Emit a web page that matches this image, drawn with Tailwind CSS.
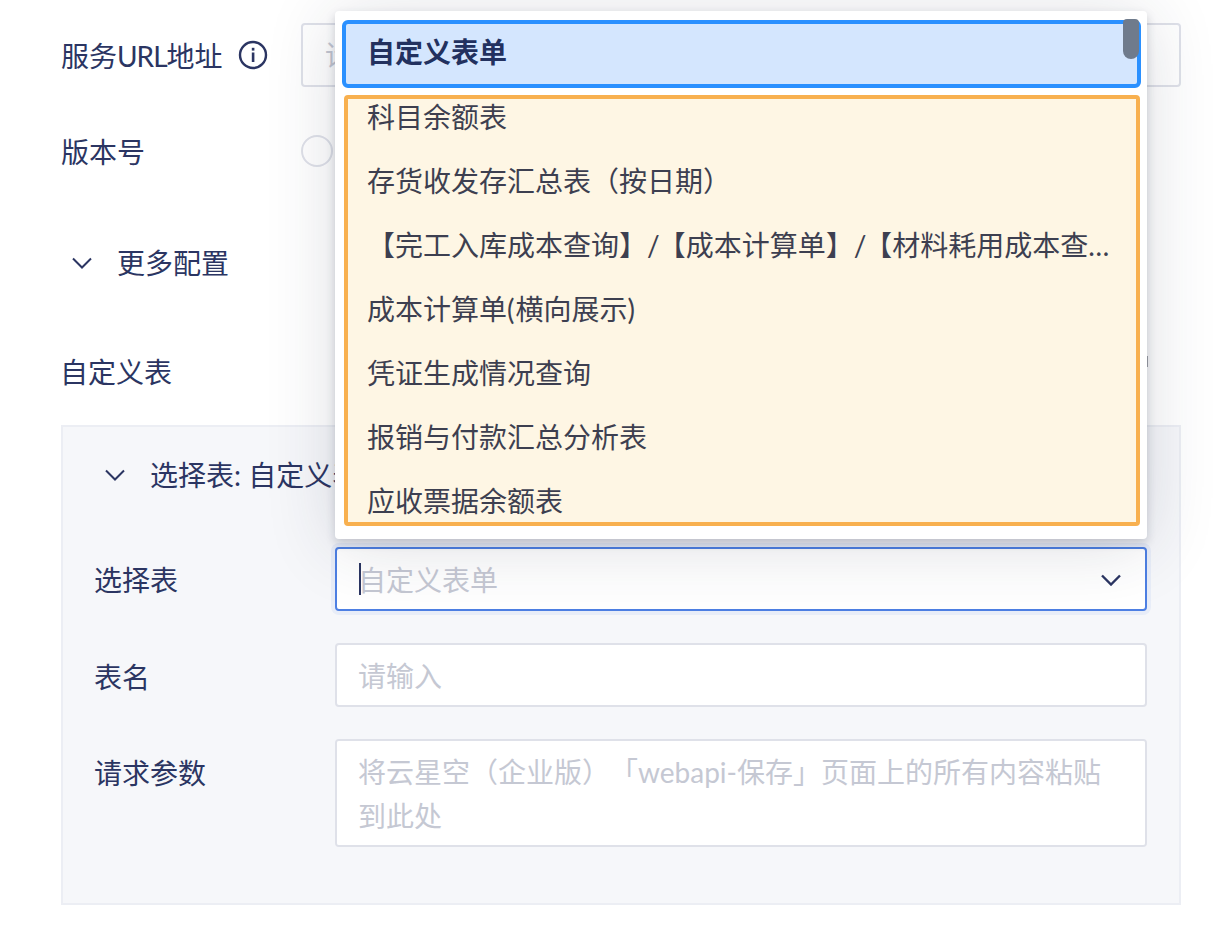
<!doctype html>
<html lang="en">
<head>
    <meta charset="UTF-8">
    <title>自定义表</title>
    <script src="https://cdn.jsdelivr.net/npm/@tailwindcss/browser@4"></script>
</head>
<body class="bg-white">
<div class="relative w-[1225px] h-[926px] overflow-hidden pl-[61px] pr-[44px] pt-[23px] text-[28px] text-[#2b3562] [text-spacing-trim:space-all] font-['Lato','Noto_Sans_CJK_SC',sans-serif]">

    <div class="flex items-center h-[64px]">
        <label class="w-[240px] flex items-center pt-[1px]"><span>服务<span class="tracking-[-1px]">URL</span>地址</span>
            <svg class="ml-[15px] mt-[-2px]" width="30" height="30" viewBox="0 0 30 30" fill="none">
                <circle cx="15" cy="15" r="13" stroke="#2b3562" stroke-width="2.4"/>
                <rect x="13.8" y="12.5" width="2.6" height="9.5" fill="#2b3562"/>
                <rect x="13.8" y="7.8" width="2.6" height="2.8" fill="#2b3562"/>
            </svg>
        </label>
        <input class="flex-1 h-[64px] px-[22px] border-2 border-[#dfe1e9] rounded-[4px] outline-none placeholder:text-[#c5c8d3]" placeholder="请输入">
    </div>

    <div class="flex items-center h-[64px] mt-[32px]">
        <label class="w-[240px] pt-[2px]">版本号</label>
        <span class="w-[32px] h-[32px] rounded-full border-2 border-[#dfe1e9]"></span>
    </div>

    <div class="flex items-center h-[64px] mt-[48px]">
        <svg class="ml-[11px]" width="20" height="12" viewBox="0 0 20 12" fill="none">
            <path d="M1 1.5L10 10.5L19 1.5" stroke="#2b3562" stroke-width="2"/>
        </svg>
        <span class="ml-[25px]">更多配置</span>
    </div>

    <div class="flex items-center h-[64px] mt-[45px]">
        <label class="ml-[-1px]">自定义表</label>
    </div>

    <div class="mt-[21px] h-[480px] border-2 border-[#eceef4] bg-[#f6f7fa] px-[32px]">
        <div class="flex items-center h-[64px] mt-[16px]">
            <svg class="ml-[10px]" width="20" height="12" viewBox="0 0 20 12" fill="none">
                <path d="M1 1.5L10 10.5L19 1.5" stroke="#2b3562" stroke-width="2"/>
            </svg>
            <span class="ml-[25px] whitespace-nowrap">选择表: 自定义表单</span>
        </div>
        <div class="flex items-center h-[64px] mt-[40px]">
            <label class="w-[240px] pt-[2px] ml-[-1px] mr-[1px]">选择表</label>
            <div class="relative flex-1 h-[64px] flex items-center pl-[22px] bg-white border-2 border-[#4d7fe3] rounded-[4px] shadow-[0_0_0_4px_rgba(77,127,227,0.08)]">
                <span class="pt-[2px] text-[#c5c8d3] ml-[-1px]">自定义表单</span>
                <span class="absolute left-[22px] top-[14px] w-[2px] h-[32px] bg-[#2b3562]"></span>
                <svg class="absolute right-[24px] top-[25px]" width="20" height="12" viewBox="0 0 20 12" fill="none">
                    <path d="M1 1.5L10 10.5L19 1.5" stroke="#2b3562" stroke-width="2.4"/>
                </svg>
            </div>
        </div>
        <div class="flex items-center h-[64px] mt-[32px]">
            <label class="w-[240px] pt-[4px] ml-[-1px] mr-[1px]">表名</label>
            <input class="flex-1 h-[64px] pl-[21px] pr-[22px] pt-[2px] bg-white border-2 border-[#dfe1e9] rounded-[4px] outline-none placeholder:text-[#c5c8d3]" placeholder="请输入">
        </div>
        <div class="flex mt-[32px]">
            <label class="w-[240px] pt-[12px] leading-[44px] ml-[-1px] mr-[1px]">请求参数</label>
            <textarea class="flex-1 h-[108px] pl-[21px] pr-[22px] py-[9px] leading-[44px] bg-white border-2 border-[#dfe1e9] rounded-[4px] outline-none resize-none placeholder:text-[#c5c8d3]" placeholder="将云星空（企业版）「webapi-保存」页面上的所有内容粘贴到此处"></textarea>
        </div>
    </div>

    <!-- dropdown over the form -->
    <div class="absolute left-[335px] top-[11px] w-[812px] h-[528px] bg-white rounded-[4px] shadow-[0_4px_10px_rgba(40,45,70,0.2),0_6px_70px_rgba(40,45,70,0.16)]">
        <div class="absolute left-[7px] top-[9px] w-[799px] h-[68px] flex items-center pl-[21px] pb-[4px] bg-[#d4e6fe] border-4 border-[#2a90ff] rounded-[6px] font-bold text-[#22315f]">自定义表单</div>
        <div class="absolute left-[788px] top-[8px] w-[16px] h-[40px] bg-[#6f7b8c] rounded-b-[8px] rounded-t-[4px]"></div>
        <div class="absolute left-[9px] top-[84px] w-[796px] h-[431px] bg-[#fef6e4] border-4 border-[#f8b04f] rounded-[4px] overflow-hidden text-[#3d3f50]">
            <ul class="mt-[-14px] pl-[19px] w-[764px]">
                <li class="h-[64px] flex items-center">科目余额表</li>
                <li class="h-[64px] flex items-center">存货收发存汇总表（按日期）</li>
                <li class="h-[64px] leading-[64px] truncate">【完工入库成本查询】<span class="tracking-[-2px]">/</span>【成本计算单】<span class="tracking-[-2px]">/</span>【材料耗用成本查询】</li>
                <li class="h-[64px] flex items-center"><span>成本计算单<span class="tracking-[1px]">(</span>横向展示<span class="tracking-[1px]">)</span></span></li>
                <li class="h-[64px] flex items-center">凭证生成情况查询</li>
                <li class="h-[64px] flex items-center">报销与付款汇总分析表</li>
                <li class="h-[64px] flex items-center">应收票据余额表</li>
            </ul>
        </div>
    </div>
    <div class="absolute left-[1147px] top-[356px] w-[1px] h-[11px] bg-[#8a8d96]"></div>
</div>
</body>
</html>
